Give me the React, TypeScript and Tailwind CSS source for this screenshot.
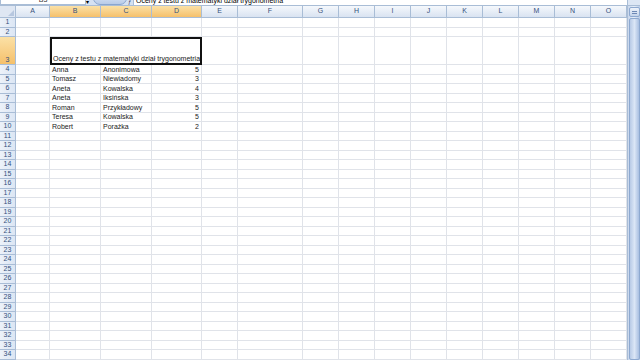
import React from "react";

const cols = [
  { l: "A", w: 34 },
  { l: "B", w: 51 },
  { l: "C", w: 51 },
  { l: "D", w: 50 },
  { l: "E", w: 36 },
  { l: "F", w: 65 },
  { l: "G", w: 36 },
  { l: "H", w: 36 },
  { l: "I", w: 36 },
  { l: "J", w: 36 },
  { l: "K", w: 36 },
  { l: "L", w: 36 },
  { l: "M", w: 36 },
  { l: "N", w: 36 },
  { l: "O", w: 36 },
];

const data: Record<number, [string, string, string]> = {
  4: ["Anna", "Anonimowa", "5"],
  5: ["Tomasz", "Niewiadomy", "3"],
  6: ["Aneta", "Kowalska", "4"],
  7: ["Aneta", "Iksińska", "3"],
  8: ["Roman", "Przykładowy", "5"],
  9: ["Teresa", "Kowalska", "5"],
  10: ["Robert", "Porażka", "2"],
};

const font = { fontFamily: '"Liberation Sans", Arial, sans-serif' };

const RowHead = ({ n, h, sel }: { n: number; h: string; sel?: boolean }) => (
  <div
    className={`w-[16px] shrink-0 ${h} flex items-end justify-center border-r border-b border-[#a9bdd6] text-[7px] leading-[8.5px] text-[#34507c] ${
      sel ? "bg-gradient-to-b from-[#fbe1a6] to-[#f5c06a]" : "bg-gradient-to-r from-[#edf2f9] to-[#dce6f4]"
    }`}
  >
    {n}
  </div>
);

const Row = ({ n }: { n: number }) => {
  const d = data[n];
  return (
    <div className="flex h-[9.5px]">
      <RowHead n={n} h="h-[9.5px]" />
      {cols.map((c, i) => (
        <div
          key={c.l}
          style={{ width: c.w }}
          className={`shrink-0 h-full border-r border-b border-[#e0e3e9] flex items-end px-[2px] text-[7px] leading-[8px] text-[#222] whitespace-nowrap ${
            i === 3 ? "justify-end" : ""
          }`}
        >
          {d && i >= 1 && i <= 3 ? d[i - 1] : ""}
        </div>
      ))}
    </div>
  );
};

export default function App() {
  const rows = Array.from({ length: 31 }, (_, i) => i + 4);
  return (
    <div className="w-[640px] h-[360px] overflow-hidden bg-white flex flex-col" style={font}>
      {/* formula bar, mostly scrolled off */}
      <div className="h-[6px] shrink-0 flex items-end overflow-hidden bg-[#d5e1f2] border-b border-[#a9bdd6]">
        <div className="w-[86px] h-[14px] bg-white border border-[#a9bdd6] flex items-end justify-center text-[7px] leading-[8px] text-[#333]">
          B3
        </div>
        <div className="w-[6px] text-[6px] leading-[6px] text-black">▾</div>
        <div className="w-[34px] h-[14px] rounded-full bg-gradient-to-b from-[#e6eefa] to-[#b8cbe8] border border-[#8aa6cf] mx-[1px]" />
        <div className="w-[5px] text-[6px] leading-[6px] text-[#446]">ƒ</div>
        <div className="flex-1 h-[14px] bg-white border-l border-[#a9bdd6] flex items-end pl-[2px] text-[7px] leading-[8px] text-black whitespace-nowrap">
          Oceny z testu z matematyki dział trygonometria
        </div>
        <div className="w-[13px] h-[14px] bg-[#dce6f4] border-l border-[#a9bdd6]" />
      </div>

      <div className="flex flex-1 min-h-0">
        <div className="w-[627px] shrink-0 flex flex-col">
          {/* column header */}
          <div className="flex h-[12px] shrink-0">
            <div className="w-[16px] shrink-0 border-r border-b border-[#a9bdd6] bg-[#dfe7f3] relative">
              <div className="absolute right-[1px] bottom-[1px] w-0 h-0 border-l-[6px] border-l-transparent border-b-[6px] border-b-[#b7c7df]" />
            </div>
            {cols.map((c, i) => (
              <div
                key={c.l}
                style={{ width: c.w }}
                className={`shrink-0 border-r border-b border-[#a9bdd6] flex items-center justify-center text-[7px] text-[#34507c] ${
                  i >= 1 && i <= 3
                    ? "bg-gradient-to-b from-[#fbe1a6] to-[#f5c06a]"
                    : "bg-gradient-to-b from-[#f5f8fc] to-[#d9e3f1]"
                }`}
              >
                {c.l}
              </div>
            ))}
          </div>

          {[1, 2].map((n) => (
            <Row key={n} n={n} />
          ))}

          {/* row 3 with bordered title */}
          <div className="flex h-[28px] shrink-0">
            <RowHead n={3} h="h-[28px]" sel />
            <div className="w-[34px] shrink-0 border-r border-b border-[#e0e3e9]" />
            <div className="w-[152px] shrink-0 h-full border-2 border-[#111] flex items-end px-[1px] text-[7px] leading-[9px] text-[#222] whitespace-nowrap">
              Oceny z testu z matematyki dział trygonometria
            </div>
            {cols.slice(4).map((c) => (
              <div key={c.l} style={{ width: c.w }} className="shrink-0 border-r border-b border-[#e0e3e9]" />
            ))}
          </div>

          {rows.map((n) => (
            <Row key={n} n={n} />
          ))}
        </div>

        {/* vertical scrollbar */}
        <div className="w-[13px] shrink-0 bg-gradient-to-r from-[#c9d7ec] via-[#e6eef9] to-[#b9cbe6] border-l border-[#a9bdd6] flex flex-col items-center">
          <div className="w-[11px] h-[10px] mt-[1px] rounded-[2px] bg-gradient-to-b from-[#eef3fb] to-[#c3d3ea] border border-[#8ea9d0] flex flex-col items-center justify-center gap-[1px]">
            <div className="w-[5px] h-[1px] bg-[#6d88b5]" />
            <div className="w-[5px] h-[1px] bg-[#6d88b5]" />
          </div>
          <div className="w-[11px] flex-1 mt-[1px] rounded-[2px] bg-gradient-to-r from-[#b8cae6] via-[#dbe6f6] to-[#a9bfe1] border border-[#8ea9d0]" />
        </div>
      </div>
    </div>
  );
}
